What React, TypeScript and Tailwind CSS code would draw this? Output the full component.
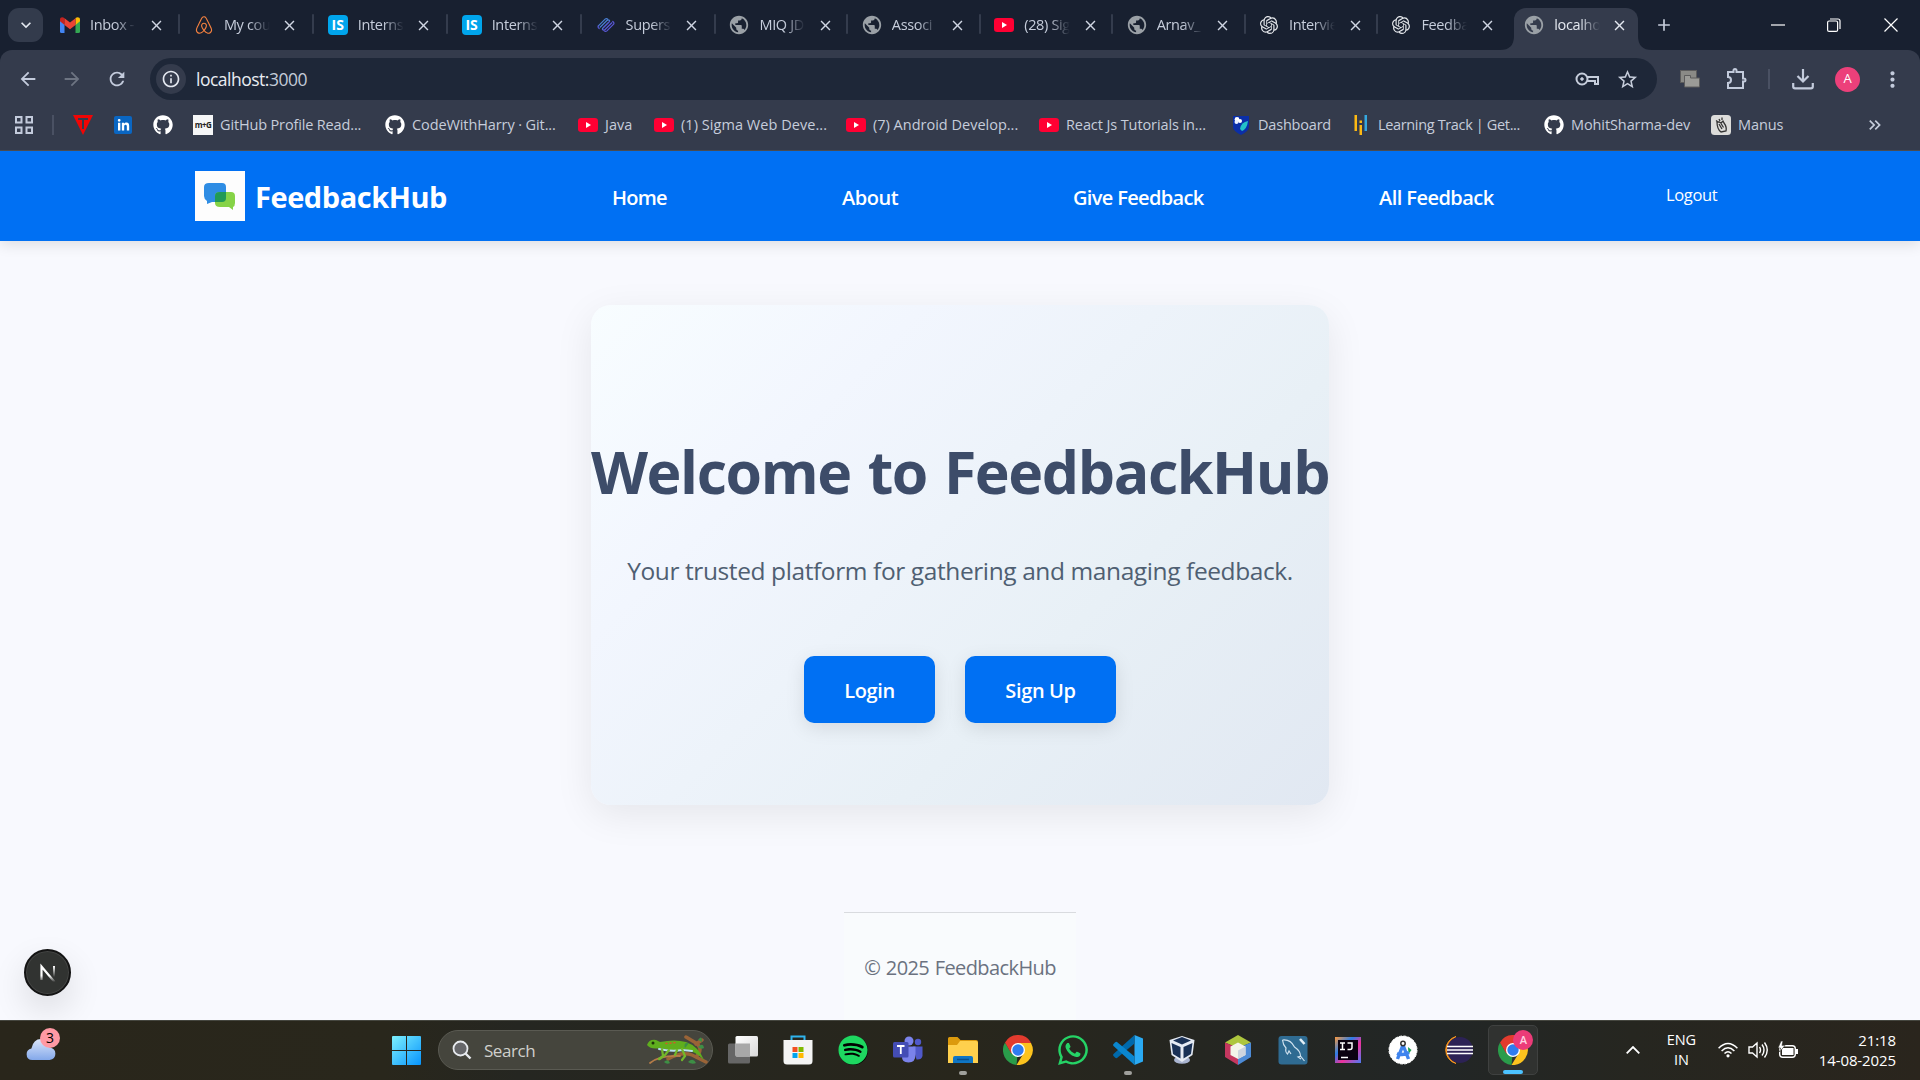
import React from "react";
import {
  MdArrowBack, MdArrowForward, MdRefresh, MdStarBorder, MdOutlineExtension,
  MdPublic, MdClose, MdAdd, MdMoreVert, MdKeyboardArrowDown, MdInfoOutline,
  MdKeyboardDoubleArrowRight,
} from "react-icons/md";
import { FaGithub, FaWhatsapp, FaAirbnb, FaSpotify, FaLinkedinIn } from "react-icons/fa";
import { SiOpenai } from "react-icons/si";

const YouTube = () => (
  <svg viewBox="0 0 20 20" className="size-5">
    <rect y="3" width="20" height="14" rx="3.2" fill="#ff0033" />
    <path d="M8 7v6l5-3z" fill="#fff" />
  </svg>
);

const Gmail = () => (
  <svg viewBox="0 0 20 16" className="w-5 h-4">
    <path d="M0 3v11.5Q0 16 1.400 16H4.500V7z" fill="#4285f4" />
    <path d="M20 3v11.5q0 1.500-1.400 1.500H15.500V7z" fill="#34a853" />
    <path d="M15.500 1.500V8L20 4.300V2.500C20 .2 17.500-.6 15.500 1z" fill="#fbbc04" />
    <path d="M0 4.300 4.500 8V1.200C2.500-.6 0 .2 0 2.500z" fill="#c5221f" />
    <path d="M4.500 1.200V8L10 12.300 15.500 8V1.200L10 5.500z" fill="#ea4335" />
  </svg>
);

const IsBadge = () => (
  <span className="flex size-5 items-center justify-center rounded-[4px] bg-[#00a5ec] font-['Open_Sans'] text-[14px] leading-none font-bold text-white">
    IS
  </span>
);

const Supers = () => (
  <svg viewBox="0 0 20 20" className="size-[18px]" fill="none" strokeWidth="1.300" strokeLinecap="round">
    <path d="M1.500 11 9 3.500q1.500-1.300 3 0M3.500 12.500l7.500-7.500q1.500-1.300 3 0M6 14l7-7" stroke="#4a7fd4" />
    <path d="M18.500 9l-7.500 7.500q-1.500 1.300-3 0M16.500 7.500 9 15q-1.500 1.300-3 0M14 6l-7 7M1.500 11q-1 1.500 1 3M18.500 9q1-1.500-1-3" stroke="#5a58d8" />
  </svg>
);

const Globe = () => <MdPublic className="size-[22px] -m-px text-[#9aa0a6]" />;
const OpenAi = () => <SiOpenai className="size-[18px] text-[#e4e7eb]" />;

type TabInfo = { icon: React.ReactNode; label: string; wide?: boolean };

const tabs: TabInfo[] = [
  { icon: <Gmail />, label: "Inbox -", wide: true },
  { icon: <FaAirbnb className="size-5 text-[#f5813f]" />, label: "My cou", wide: true },
  { icon: <IsBadge />, label: "Interns", wide: true },
  { icon: <IsBadge />, label: "Interns", wide: true },
  { icon: <Supers />, label: "Supers", wide: true },
  { icon: <Globe />, label: "MIQ JD" },
  { icon: <Globe />, label: "Associ" },
  { icon: <YouTube />, label: "(28) Sig" },
  { icon: <Globe />, label: "Arnav_" },
  { icon: <OpenAi />, label: "Intervie" },
  { icon: <OpenAi />, label: "Feedba" },
];

const fade = "w-[46px] shrink-0 whitespace-nowrap text-[14.5px] tracking-[-0.35px] [mask-image:linear-gradient(to_right,black_55%,transparent)]";

function Tab({ icon, label, wide, last }: TabInfo & { last: boolean }) {
  return (
    <div className={`${wide ? "w-[133.900px]" : "w-[132.400px]"} relative flex h-[50px] shrink-0 items-center pl-[13.500px]`}>
      <span className="flex w-5 shrink-0 justify-center">{icon}</span>
      <span className={`${fade} ml-[10px]`}>{label}</span>
      <MdClose className="ml-[11.500px] size-[17px] shrink-0 text-[#d0d6e3]" />
      {!last && <span className="absolute top-[14px] right-0 h-5 w-[2px] rounded bg-[#343c4d]" />}
    </div>
  );
}

function TabStrip() {
  return (
    <div className="flex h-[50px] items-center bg-[#182030] text-[#c6cddb]">
      <button className="ml-2 flex h-[34px] w-[35px] shrink-0 items-center justify-center rounded-[11px] bg-[#333b4c]">
        <MdKeyboardArrowDown className="size-5 text-[#e4e8f0]" />
      </button>
      <div className="ml-[3.500px] flex">
        {tabs.map((t, i) => (
          <Tab key={i} {...t} last={i === tabs.length - 1} />
        ))}
      </div>
      <div className="relative ml-[4px] flex h-[42px] w-[124px] shrink-0 items-center self-end rounded-t-[12px] bg-[#343b4c] pl-[10px] text-[#e4e8f0]">
        <svg viewBox="0 0 14 14" className="absolute bottom-0 -left-[14px] size-[14px]"><path d="M14 0v14H0Q14 14 14 0" fill="#343b4c" /></svg>
        <svg viewBox="0 0 14 14" className="absolute -right-[14px] bottom-0 size-[14px]"><path d="M0 0v14h14Q0 14 0 0" fill="#343b4c" /></svg>
        <span className="-mt-[8px] flex items-center">
          <span className="flex w-5 shrink-0 justify-center"><Globe /></span>
          <span className={`${fade} ml-[10px]`}>localho</span>
          <MdClose className="ml-[11px] size-[17px] shrink-0" />
        </span>
      </div>
      <MdAdd className="ml-[16px] size-[20px] shrink-0" />
      <div className="mr-[22px] ml-auto flex items-center text-white">
        <svg viewBox="0 0 14 14" className="mr-[42px] size-[14px]"><path d="M0 7h14" stroke="#fff" strokeWidth="1.200" /></svg>
        <svg viewBox="0 0 14 14" className="mr-[43px] size-[14px]" fill="none" stroke="#fff" strokeWidth="1.200"><rect x=".6" y="3" width="10" height="10.400" rx="1.500" /><path d="M3 1h8q2 0 2 2v8" /></svg>
        <svg viewBox="0 0 14 14" className="size-[14px]"><path d="M.5.5l13 13M13.500.5l-13 13" stroke="#fff" strokeWidth="1.200" /></svg>
      </div>
    </div>
  );
}

function Toolbar() {
  return (
    <div className="flex h-[58px] shrink-0 items-center text-[#c3cbdc]">
      <MdArrowBack className="ml-[17px] size-[22px]" />
      <MdArrowForward className="ml-[22px] size-[22px] text-[#6d7482]" />
      <MdRefresh className="ml-[23px] size-[22px]" />
      <div className="ml-[22px] flex h-[42px] w-[1507px] items-center rounded-full bg-[#1e2738]">
        <span className="ml-[6px] flex size-[30px] items-center justify-center rounded-full bg-[#343b4c]">
          <MdInfoOutline className="size-5 text-[#e4e8f0]" />
        </span>
        <span className="ml-[10px] font-['Open_Sans'] text-[17.500px] tracking-[-0.5px] text-[#e9ecf2]">
          localhost:<span className="text-[#c3cbd8]">3000</span>
        </span>
        <svg viewBox="0 0 24 16" className="ml-auto h-4 w-6" fill="none" stroke="#c6cddb" strokeWidth="2">
          <circle cx="7" cy="8" r="5.500" /><circle cx="7" cy="8" r="1.300" fill="#c6cddb" strokeWidth="1" /><path d="M12 6h11v7h-3v-3H12" />
        </svg>
        <MdStarBorder className="mr-[18px] ml-[17px] size-[23px] text-[#c6cddb]" />
      </div>
      <svg viewBox="0 0 20 18" className="ml-[23px] h-[18px] w-5" stroke="#5c5c5c"><rect x=".5" y=".5" width="16" height="12" fill="#8a8a86" /><path d="M4.500 5.500h6v2.500h9v9h-15z" fill="#9b9b97" /></svg>
      <svg viewBox="0 0 24 24" className="ml-[24px] size-6" fill="none" stroke="#c3cbdc" strokeWidth="2"><path d="M4 5h5.500V3.500q0-1.500 1.500-1.500t1.500 1.500V5H19v6.500h1q1.500 0 1.500 1.500T20 14.500h-1V21H4v-5q3 0 3-3t-3-3z" /></svg>
      <span className="ml-[20px] h-5 w-[2px] bg-[#4a5163]" />
      <svg viewBox="0 0 22 22" className="ml-[22px] size-[22px]" fill="none" stroke="#c3cbdc" strokeWidth="2.200"><path d="M11 1v12M5.500 8l5.500 5.500L16.500 8M1.200 15v3.500q0 1.800 1.800 1.800h16q1.800 0 1.800-1.800V15" /></svg>
      <span className="ml-[21px] flex size-[25px] items-center justify-center rounded-full bg-[#ec407a] text-[13px] text-white">A</span>
      <MdMoreVert className="ml-[20px] size-[25px]" />
    </div>
  );
}

const Cat = () => <FaGithub className="size-5 text-white" />;

const bookmarks = [
  { w: "w-[192px]", t: "tracking-[-0.15px]", icon: <span className="flex size-5 items-center justify-center bg-[#f5f6f7] font-['Open_Sans'] text-[8px] font-bold tracking-[-0.6px] text-[#222]">m+G</span>, label: "GitHub Profile Read..." },
  { w: "w-[193px]", t: "tracking-[-0.1px]", icon: <Cat />, label: "CodeWithHarry · Git..." },
  { w: "w-[76px]", t: "tracking-[0px]", icon: <YouTube />, label: "Java" },
  { w: "w-[192px]", t: "tracking-[0.05px]", icon: <YouTube />, label: "(1) Sigma Web Deve..." },
  { w: "w-[193px]", t: "tracking-[0px]", icon: <YouTube />, label: "(7) Android Develop..." },
  { w: "w-[192px]", t: "tracking-[-0.1px]", icon: <YouTube />, label: "React Js Tutorials in..." },
  {
    w: "w-[120px]", t: "tracking-[-0.2px]", label: "Dashboard",
    icon: (
      <svg viewBox="0 0 20 20" className="size-5"><path d="M2 1h16v11q0 4-8 8-8-4-8-8z" fill="#0b2fa8" /><path d="M9 14q1-7 8-8-1 8-6 10z" fill="#23c2c8" /><circle cx="6" cy="4.500" r="2.400" fill="#fff" /><circle cx="9" cy="6" r="2" fill="#fff" /><circle cx="5.500" cy="7" r="2" fill="#e9f0ff" /></svg>
    ),
  },
  {
    w: "w-[193px]", t: "tracking-[-0.35px]", label: "Learning Track | Get...",
    icon: (
      <svg viewBox="0 0 20 20" className="size-5"><path d="M3.500 0h2.500v16H3.500zM8.500 5.500H11V8H8.500zM8.500 10H11v10H8.500z" fill="#fdb913" /><path d="M13.500 0H16v16h-2.500z" fill="#35a8e0" /></svg>
    ),
  },
  { w: "w-[167px]", t: "tracking-[-0.1px]", icon: <Cat />, label: "MohitSharma-dev" },
  {
    w: "w-[90px]", t: "tracking-[-0.1px]", label: "Manus",
    icon: (
      <svg viewBox="0 0 20 20" className="size-5"><rect width="20" height="20" rx="3.500" fill="#dcdcda" /><path d="M6 7q0 7 4 10l5-1q1-4-2-8l-1-2-2 2-2-1zM8 4l1 2M11 2.500V5M5 5.500l1.500 1M8 9l3 5M10 8.500l2.500 4" fill="none" stroke="#333" strokeWidth="1.300" /></svg>
    ),
  },
];

function BookmarksBar() {
  return (
    <div className="flex h-[34px] shrink-0 items-center text-[14.500px] text-[#c6cddb]">
      <svg viewBox="0 0 20 20" className="ml-[14px] size-5 shrink-0" fill="none" stroke="#c3cbdc" strokeWidth="2"><path d="M2 2h5.500v5.500H2zM12.500 2H18v5.500h-5.500zM2 12.500h5.500V18H2zM12.500 12.500H18V18h-5.500z" /></svg>
      <span className="ml-[18px] h-5 w-[2px] shrink-0 bg-[#4a5163]" />
      <svg viewBox="0 0 20 20" className="ml-[19px] size-5 shrink-0"><path d="M0 0h20L10 20z" fill="#f00505" /><path d="M5 4h10M10 4v10" stroke="#343b4c" strokeWidth="2" /></svg>
      <span className="ml-[21px] flex size-[18px] shrink-0 items-center justify-center rounded-[2px] bg-[#0a66c2]">
        <FaLinkedinIn className="size-[13px] text-white" />
      </span>
      <span className="ml-[21px] shrink-0"><Cat /></span>
      <div className="ml-[20px] flex">
        {bookmarks.map((b) => (
          <div key={b.label} className={`${b.w} ${b.t} flex shrink-0 items-center gap-[7px] whitespace-nowrap`}>
            <span className="shrink-0">{b.icon}</span>
            {b.label}
          </div>
        ))}
      </div>
      <MdKeyboardDoubleArrowRight className="mr-[35px] ml-auto size-5 shrink-0" />
    </div>
  );
}

function SiteNav() {
  return (
    <header className="relative flex h-[90px] shrink-0 items-center bg-[#0070f3] text-[20px] font-semibold text-white shadow-[0_3px_14px_rgba(0,0,0,0.12)]">
      <span className="ml-[195px] flex size-[50px] shrink-0 items-center justify-center bg-[#fdfdfd]">
        <svg viewBox="0 0 50 50" className="size-[50px]">
          <path d="M14 12h13q4 0 4 4v11q0 4-4 4H17l-5 2v-3q-3-2-3-5v-9q0-4 5-4z" fill="#2f8de4" />
          <path d="M25 21h11q4 0 4 4v7q0 3-2 4v3l-4-3h-9q-5 0-5-4v-7q0-4 5-4z" fill="#86d347" />
          <path d="M25 21h6v6q0 4-4 4h-7v-6q0-4 5-4z" fill="#219a56" />
        </svg>
      </span>
      <span className="ml-[10px] w-[357px] pt-[2px] text-[29px] font-bold tracking-[-0.45px]">FeedbackHub</span>
      <a className="w-[230px] pt-[4px] tracking-[-0.75px]">Home</a>
      <a className="w-[231px] pt-[4px] tracking-[-0.45px]">About</a>
      <a className="w-[306px] pt-[4px] tracking-[-0.65px]">Give Feedback</a>
      <a className="w-[287px] pt-[4px] tracking-[-0.55px]">All Feedback</a>
      <span className="pb-[2px] text-[16.500px] font-normal tracking-[-0.35px]">Logout</span>
    </header>
  );
}

const heroButton = "flex h-[67px] items-center justify-center rounded-[10px] bg-[#0070f3] pt-[3px] text-[20px] font-semibold tracking-[-0.35px] text-white shadow-[0_5px_19px_rgba(0,0,0,0.1)]";

function Page() {
  return (
    <div className="relative flex h-[869px] flex-col overflow-hidden bg-[#f8f9fe]">
      <SiteNav />
      <main className="mx-auto mt-[64px] flex h-[500px] w-[738px] shrink-0 flex-col items-center rounded-[20px] bg-[linear-gradient(135deg,#f8fdff_0%,#f2f6fe_27%,#e8f0f6_65%,#e1e8f2_100%)] shadow-[0_10px_38px_rgba(0,0,0,0.08)]">
        <h1 className="mt-[125px] text-[59px] leading-[82px] font-bold tracking-[-1.400px] [word-spacing:3px] whitespace-nowrap text-[#3d4c69]">Welcome to FeedbackHub</h1>
        <p className="mt-[41px] text-[24.500px] leading-[36px] tracking-[-0.4px] whitespace-nowrap text-[#4f5f72]">Your trusted platform for gathering and managing feedback.</p>
        <div className="mt-[67px] flex gap-[30px]">
          <button className={`${heroButton} w-[131px]`}>Login</button>
          <button className={`${heroButton} w-[151px]`}>Sign Up</button>
        </div>
      </main>
      <footer className="mx-auto mt-[107px] flex w-[232px] grow justify-center border-t border-[#d9dbdf] bg-[#f9fbfd] pt-[40px] text-[20px] leading-[30px] tracking-[-0.6px] [word-spacing:1px] whitespace-nowrap text-[#6b7280]">
        © 2025 FeedbackHub
      </footer>
      <div className="absolute top-[798px] left-[24px] flex size-[47px] items-center justify-center rounded-full border-2 border-[#141414] bg-[#313331] shadow-[0_14px_34px_rgba(0,0,0,0.12)] ring-1 ring-[#55555588] ring-inset">
        <svg viewBox="0 0 20 20" className="size-5" fill="none">
          <defs>
            <linearGradient id="nd" x1="0" y1="0" x2="0" y2="1"><stop offset=".6" stopColor="#fff" /><stop offset="1" stopColor="#fff" stopOpacity="0" /></linearGradient>
            <linearGradient id="nv" gradientUnits="userSpaceOnUse" x1="0" y1="3" x2="0" y2="14"><stop stopColor="#fff" /><stop offset="1" stopColor="#fff" stopOpacity="0" /></linearGradient>
          </defs>
          <path d="M3.500 17V3.500L16.500 19" stroke="url(#nd)" strokeWidth="2.200" />
          <path d="M16 3v11" stroke="url(#nv)" strokeWidth="2" />
        </svg>
      </div>
    </div>
  );
}

const Chrome = () => (
  <svg viewBox="0 0 30 30" className="size-[30px]">
    <path d="M15 15 2 7.500A15 15 0 0 1 28 7.500z" fill="#e33b2e" />
    <path d="M15 15 13.500 30A15 15 0 0 1 2 7.500l6.500 11z" fill="#2a9c4a" />
    <path d="M15 8h13a15 15 0 0 1-14.500 22l7-11.500z" fill="#fcc31e" />
    <path d="M2 7.500l6.500 11.250L15 8h13z" fill="#e33b2e" />
    <circle cx="15" cy="15" r="7" fill="#fff" />
    <circle cx="15" cy="15" r="5.700" fill="#2f7cf0" />
  </svg>
);

const apps: { icon: React.ReactNode; dot?: boolean }[] = [
  { icon: <svg viewBox="0 0 30 30" className="size-[30px]"><defs><linearGradient id="tv" x1="0" y1="0" x2="1" y2="1"><stop stopColor="#fff" /><stop offset="1" stopColor="#d9d9d9" /></linearGradient></defs><rect y="8.500" width="22" height="20" rx="1.500" fill="#666" /><rect x="7.500" y="1" width="22.500" height="20.500" rx="1.500" fill="url(#tv)" /><path d="M7.500 8.500H22v13H9q-1.500 0-1.500-1.500z" fill="#a8a8a8" /></svg> },
  { icon: <svg viewBox="0 0 30 30" className="size-[30px]"><path d="M8.500 6V1.500h13V6" fill="none" stroke="#2fb4ee" strokeWidth="2" /><path d="M.5 5h29v21q0 3.500-3.500 3.500H4Q.5 29.500.5 26z" fill="#f4f4f4" /><path d="M9.500 12h5v5h-5z" fill="#f25022" /><path d="M15.500 12h5v5h-5z" fill="#7fba00" /><path d="M9.500 18h5v5h-5z" fill="#00a4ef" /><path d="M15.500 18h5v5h-5z" fill="#ffb900" /></svg> },
  { icon: <span className="flex size-[29px] items-center justify-center rounded-full bg-black"><FaSpotify className="size-[30px] shrink-0 text-[#1ed760]" /></span> },
  { icon: <svg viewBox="0 0 30 30" className="size-[30px]"><circle cx="25" cy="7" r="3.200" fill="#5059c9" /><path d="M20 11.500h9.500V21q-1 4-6 3.500z" fill="#5059c9" /><circle cx="16" cy="6" r="4.500" fill="#7b83eb" /><path d="M9 11.500h13.500V20q0 7.500-7 7.500T9 21z" fill="#7b83eb" /><rect y="7" width="15.500" height="15.500" rx="1.500" fill="#444db5" /><path d="M4 11h7.500M7.800 11v8" stroke="#fff" strokeWidth="1.800" /></svg> },
  { dot: true, icon: <svg viewBox="0 0 30 30" className="size-[30px]"><path d="M0 3.500Q0 2 1.500 2h8l3 3H28q2 0 2 2v5H0z" fill="#dc9a0d" /><path d="M0 10h9l3-4h16q2 0 2 2v20H0z" fill="#ffd04d" /><path d="M5 28v-5q0-2 2-2h16q2 0 2 2v5z" fill="#0f75c4" /><path d="M9 24.500h12" stroke="#074f8d" strokeWidth="1.500" /></svg> },
  { icon: <Chrome /> },
  { icon: <FaWhatsapp className="size-[34px] text-[#25d366]" /> },
  { dot: true, icon: <svg viewBox="0 0 30 30" className="size-[30px]"><path d="M21.500 0 30 3.500v23L21.500 30z" fill="#2aaaf3" /><path d="M21.500 0v8.500L4 23q-1 .5-2-.5L.5 21q-.8-1 0-2z" fill="#0069ab" /><path d="M21.500 30v-8.500L4 7Q3 6.500 2 7.500L.5 9q-.8 1 0 2z" fill="#0a86cf" /></svg> },
  { icon: <svg viewBox="0 0 30 30" className="size-[30px]"><ellipse cx="14" cy="25" rx="8" ry="3.800" fill="#a9b4d0" /><path d="M14 1 26.500 5 24.500 20 14 27 3.500 20 1.500 5z" fill="#e6ebf4" /><path d="M14 2 23 5.500 14 9.500 5 5.500zM3.500 8l9 4v11.500l-7.500-4.500zM24.500 8l-9 4v11.500l7.500-4.500z" fill="#1a3156" /></svg> },
  { icon: <svg viewBox="0 0 30 30" className="size-[30px]"><path d="M15 0 28 7.500 15 13 2 7.500z" fill="#adc63e" /><path d="M2 7.500 15 13v17L2 22z" fill="#c5375f" /><path d="M28 7.500 15 13v17l13-8z" fill="#4d8bd6" /><path d="M15 7.500l7.500 4v8.500L15 24l-7.500-4v-8.500z" fill="#f3f4ea" /><path d="M15 15.500l7.500-4v8.500L15 24z" fill="#ced5df" /></svg> },
  { icon: <svg viewBox="0 0 30 30" className="size-[30px]"><rect x=".5" y="1" width="29" height="28.500" rx="3" fill="#2f6b92" /><path d="M4.500 5q8-1 12 7 6 4 6 9l4 5M4.500 5q.5 5 3.500 8-1 4 1.500 6l1.500-3 2 3M23 21l-3 1 3 2" fill="none" stroke="#cfe1ee" strokeWidth="1.200" /><path d="M22 4l4.500 5" stroke="#e3eef6" strokeWidth="2.600" /></svg> },
  { icon: <svg viewBox="0 0 30 30" className="size-[30px]"><defs><linearGradient id="ij" x1="0" y1="0" x2="1" y2="1"><stop stopColor="#ff9a3c" /><stop offset=".35" stopColor="#2b7de9" /><stop offset=".6" stopColor="#f0319a" /><stop offset="1" stopColor="#4a7cf5" /></linearGradient></defs><rect x="2" y="2" width="26" height="26" fill="url(#ij)" /><rect x="5" y="5" width="20" height="20" fill="#0b0210" /><path d="M7 8h5M9.500 8v6.500M7 14.500h5M14.500 8h4.500v4.500q0 2-2 2h-2.500M8 22.500h7" fill="none" stroke="#fff" strokeWidth="1.500" /></svg> },
  { icon: <svg viewBox="0 0 30 30" className="size-[30px]"><circle cx="15" cy="15" r="14" fill="#fff" strokeDasharray="3 1.400" stroke="#fff" /><path d="M20 12l3.500 3-3 4z" fill="#1e9e52" /><path d="M15 10 9.500 24M15 10l5.500 14M9 18.500q6 2.500 12-1" fill="none" stroke="#3f84ee" strokeWidth="3.400" /><circle cx="15" cy="8.500" r="2.200" fill="#fff" stroke="#333" strokeWidth="1.500" /></svg> },
  { icon: <svg viewBox="0 0 30 30" className="size-[30px]"><path d="M13 1.500A14 14 0 0 0 13 28.500 15 15 0 0 1 13 1.500" fill="#f7941e" stroke="#f7941e" /><circle cx="17" cy="15" r="13" fill="#2c2255" /><path d="M4 11.500h26M4 15h26M4 18.500h26" stroke="#fff" strokeWidth="1.600" /></svg> },
];

function Taskbar() {
  return (
    <footer className="flex h-[60px] items-center border-t border-[#45463f] bg-[linear-gradient(90deg,#29261b_0%,#29271c_20%,#252621_27%,#28261c_50%,#222626_75%,#262620_85%,#2a251d_100%)] pb-px text-white">
      <div className="relative ml-[25px] h-[42px] w-[36px] shrink-0">
        <svg viewBox="0 0 32 24" className="absolute top-[9px] left-0 h-[23px] w-[32px]"><defs><linearGradient id="cl" x1="0" y1="0" x2="0" y2="1"><stop stopColor="#dbe6fa" /><stop offset="1" stopColor="#83a8ea" /></linearGradient></defs><path d="M7 23q-6 0-6-6 0-5 5-6Q8 1 16 1q8 0 9 9 6 1 6 6.500T25 23z" fill="url(#cl)" /></svg>
        <span className="absolute -top-px left-[15px] flex size-[20px] items-center justify-center rounded-full bg-[#ff99a4] text-[14px] leading-none text-black">3</span>
      </div>
      <svg viewBox="0 0 29 29" className="ml-[331px] size-[29px] shrink-0"><defs><linearGradient id="wn" x1="0" y1="0" x2="1" y2="1"><stop stopColor="#7df0fd" /><stop offset="1" stopColor="#0794fd" /></linearGradient></defs><path d="M1 0h13v14H0V1q0-1 1-1M15 0h13q1 0 1 1v13H15zM0 15h14v14H1q-1 0-1-1zM15 15h14v13q0 1-1 1H15z" fill="url(#wn)" /></svg>
      <div className="ml-[17px] flex h-10 w-[275px] shrink-0 items-center rounded-full border border-[#5a5a52] bg-[#45453d]">
        <svg viewBox="0 0 20 20" className="ml-[13px] size-5" fill="none" stroke="#e8ebef" strokeWidth="1.800"><circle cx="8.500" cy="8.500" r="7" fill="#66676a" /><path d="M13.500 13.500l5 5" strokeWidth="2.400" /></svg>
        <span className="ml-[12px] pt-px text-[17px] tracking-[-0.45px] text-[#d0d0cc]">Search</span>
        <svg viewBox="0 0 62 30" className="mr-[4px] ml-auto h-[30px] w-[62px]" fill="none" strokeLinecap="round">
          <path d="M22 24Q36 16 46 20L60 27M50 22Q58 14 50 8L40 2M50 9l6-4" stroke="#9a6437" strokeWidth="3.500" />
          <path d="M4 28Q14 20 34 21" stroke="#b57c48" strokeWidth="1.800" />
          <path d="M1 10q2-6 9-5l4 2q15-3 26 0 12 4 18 18-9-9-20-11-11 3-23-1-10 2-14-3z" fill="#5fae1e" />
          <path d="M13 14q12 3 24 1l9 1" stroke="#b8e2ee" strokeWidth="2" />
          <path d="M16 14l1 7-4 3M23 15l-4 5-5 4M36 14l3 7-3 4M31 15l-2 5" stroke="#72b82a" strokeWidth="2.200" />
          <path d="M20 8.500l11-1" stroke="#d6562a" strokeWidth="1.500" strokeDasharray="1 3" />
          <circle cx="7" cy="8" r="1.500" fill="#1d3508" />
          <path d="M52 5q4-6 4 2zM52 12q5-5 6 1-3 2-6-1M42 27q5-5 8 1-4 2-8-1M18 27q4-4 6 1-3 2-6-1M43 8q-6-1-4 5z" fill="#3d8f45" />
        </svg>
      </div>
      <div className="ml-[3px] flex">
        {apps.map((a, i) => (
          <div key={i} className="relative flex h-[50px] w-[54.950px] shrink-0 items-center justify-center">
            {a.icon}
            {a.dot && <span className="absolute bottom-0 left-[23.500px] h-1 w-2 rounded-full bg-[#a0a09c]" />}
          </div>
        ))}
      </div>
      <div className="relative ml-[3.300px] flex size-[50px] shrink-0 items-center justify-center rounded-[5px] border border-[#3f4140] bg-[#303230]">
        <Chrome />
        <span className="absolute top-[4px] right-[4px] flex size-[20px] items-center justify-center rounded-full bg-[#ec3b78] text-[11px] font-semibold text-[#ffd3e2]">A</span>
        <span className="absolute bottom-0 left-[14px] h-1 w-5 rounded-full bg-[#4cc2ff]" />
      </div>
      <svg viewBox="0 0 14 8" className="ml-[88px] h-2 w-[14px] shrink-0" fill="none" stroke="#fff" strokeWidth="1.800"><path d="M.7 7.300 7 1l6.300 6.300" /></svg>
      <div className="ml-[24px] w-[34px] shrink-0 text-center text-[14.500px] leading-5 tracking-[-0.1px]">ENG<br />IN</div>
      <svg viewBox="0 0 20 16" className="ml-[20px] h-4 w-5 shrink-0" fill="none" stroke="#fff" strokeWidth="1.500"><path d="M.6 6.300Q10-3.300 19.400 6.300M3.600 9Q10 2.600 16.400 9M6.500 11.500Q10 8 13.500 11.500" /><circle cx="10" cy="13.800" r="1.600" fill="#fff" stroke="none" /></svg>
      <svg viewBox="0 0 20 18" className="ml-[10px] h-[18px] w-5 shrink-0" fill="none" stroke="#fff" strokeWidth="1.400"><path d="M1 6h3.500L9 2v14l-4.500-4H1zM11.500 6q2 3 0 6M14 3.500q4 5.500 0 11M16.500 1.500q5.500 7.500 0 15" /></svg>
      <svg viewBox="0 0 20 18" className="ml-[10px] h-[18px] w-5 shrink-0"><rect x="1.700" y="4.700" width="15.600" height="11.600" rx="3" fill="none" stroke="#fff" strokeWidth="1.400" /><path d="M4 7h11.500v7H4zM18 8h2v5h-2z" fill="#fff" /><path d="M3 0 0 7h2.500L1.500 11 7 4.500H4L5 0z" fill="#fff" stroke="#26261f" strokeWidth=".6" /></svg>
      <div className="mr-[24px] ml-auto pb-px text-right text-[15px] leading-5 tracking-[-0.1px]">21:18<br />14-08-2025</div>
    </footer>
  );
}

export default function App() {
  return (
    <div className="flex h-[1080px] w-[1920px] flex-col overflow-hidden bg-[#182030] font-['Open_Sans',sans-serif]">
      <TabStrip />
      <div className="flex h-[101px] shrink-0 flex-col rounded-t-[12px] border-b border-[#4a4c50] bg-[#343b4c]">
        <Toolbar />
        <BookmarksBar />
      </div>
      <Page />
      <Taskbar />
    </div>
  );
}
